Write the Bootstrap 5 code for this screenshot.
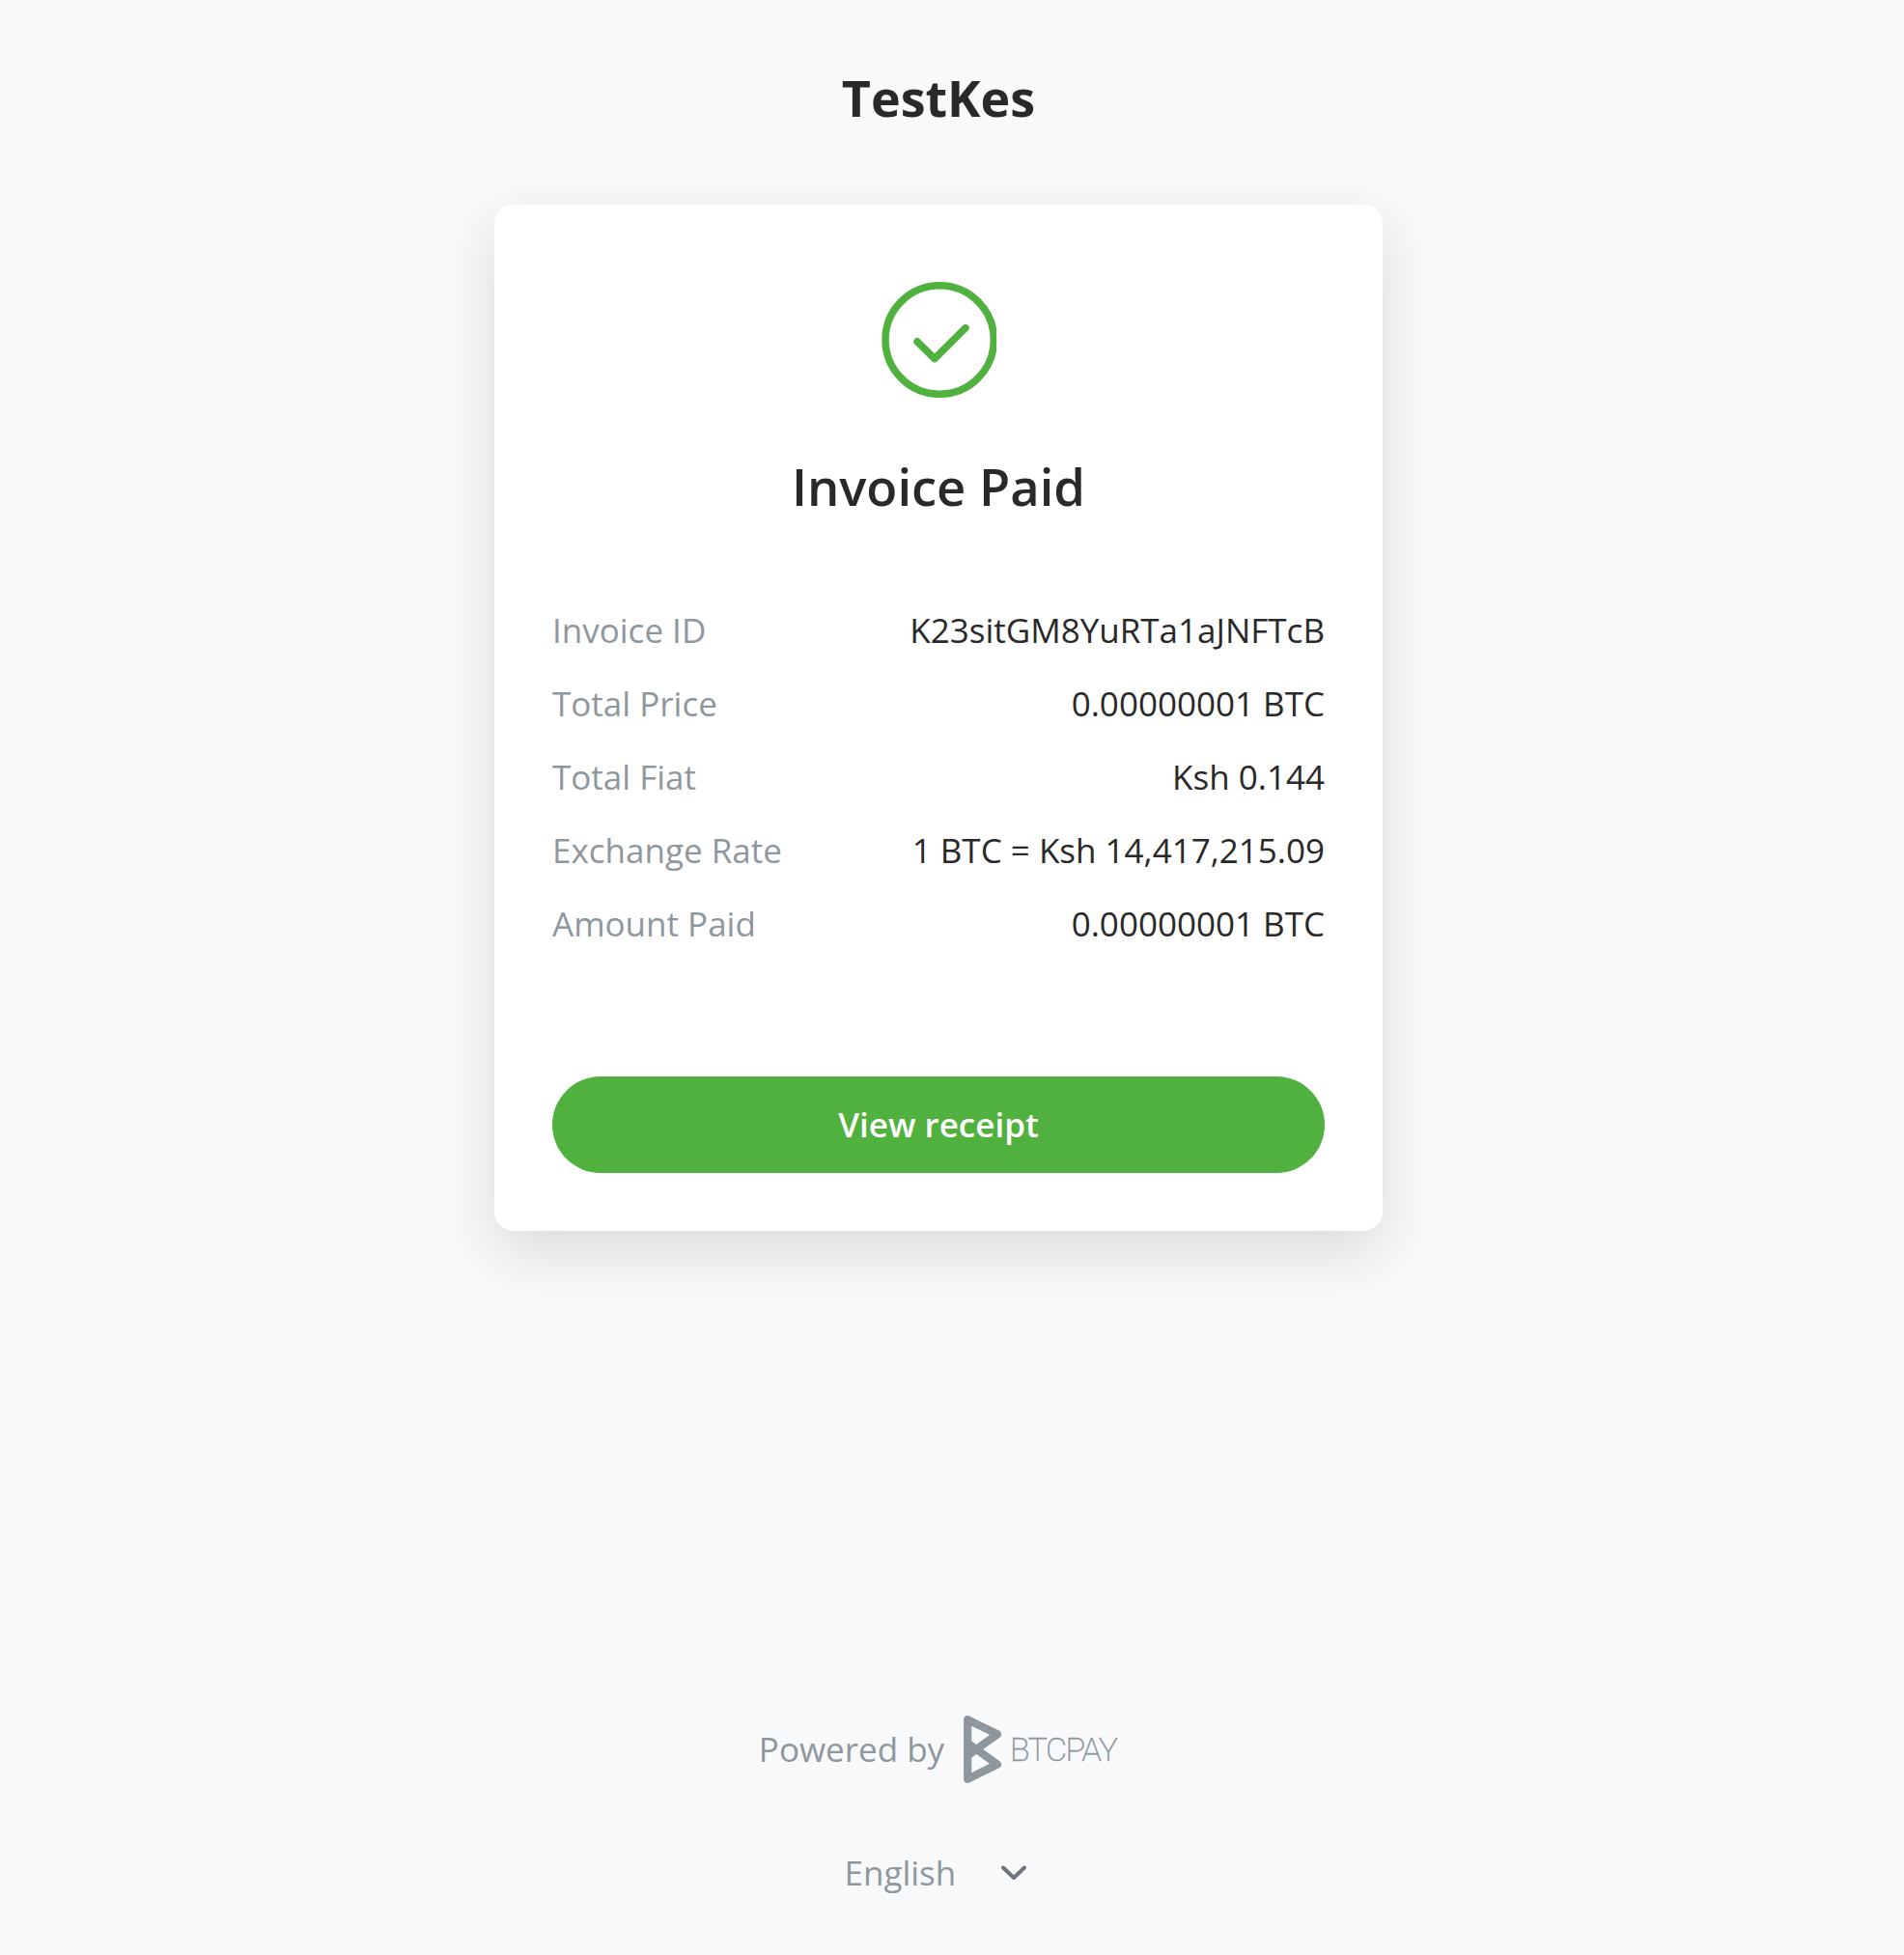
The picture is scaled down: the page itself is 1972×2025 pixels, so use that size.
<!DOCTYPE html>
<html lang="en">
<head>
<meta charset="utf-8">
<meta name="viewport" content="width=device-width, initial-scale=1">
<title>TestKes</title>
<link rel="stylesheet" href="https://cdn.jsdelivr.net/npm/bootstrap@5.3.0/dist/css/bootstrap.min.css">
<style>
  body { background: #f8f9fb; color: #292929; font-family: "Open Sans", sans-serif; font-size: 35px; line-height: 52px; }
  .checkout { width: 1944px; height: 2025px; padding-top: 71px; }
  .store-name, .status-title { font-size: 52px; line-height: 60px; }
  .store-name { font-weight: 700; margin-bottom: 81px; }
  .status-title { font-size: 52.5px; font-weight: 600; margin: 62px 0 81px; }
  .invoice-card { width: 920px; height: 1063px; padding: 80px 60px 60px; border-radius: 20px; background: #fff; box-shadow: 0 22px 60px rgba(0,0,0,.12); }
  .details dt, .details dd { font-weight: 400; line-height: 76px; }
  .details dt, .muted-text { color: #8f979e; }
  .btn-receipt, .btn-receipt:hover { height: 100px; margin-top: 120px; background: #51b13e; border: 0; color: #fff; font-size: 35px; font-weight: 600; line-height: 52px; }
  .powered { height: 70px; gap: 19px; margin-bottom: 67px; }
  .powered svg { margin-right: -5px; }
  .language { width: 195px; height: 111px; }
  .language svg { margin-right: 5px; margin-top: 12px; }
  svg { display: block; flex: none; }
</style>
</head>
<body>
<div class="checkout d-flex flex-column align-items-center">
  <h1 class="store-name">TestKes</h1>
  <main class="invoice-card d-flex flex-column align-items-stretch">
    <svg class="mx-auto" width="120" height="120" viewBox="0 0 120 120" fill="none" stroke="#51b13e" stroke-width="7.5">
      <circle cx="61.2" cy="60" r="56.2"/>
      <path d="M38 61.8 56 79.5 88 47.7" stroke-linecap="round" stroke-linejoin="round"/>
    </svg>
    <h2 class="status-title text-center">Invoice Paid</h2>
    <dl class="details mb-0">
      <div class="d-flex justify-content-between"><dt>Invoice ID</dt><dd class="mb-0">K23sitGM8YuRTa1aJNFTcB</dd></div>
      <div class="d-flex justify-content-between"><dt>Total Price</dt><dd class="mb-0">0.00000001 BTC</dd></div>
      <div class="d-flex justify-content-between"><dt>Total Fiat</dt><dd class="mb-0">Ksh 0.144</dd></div>
      <div class="d-flex justify-content-between"><dt>Exchange Rate</dt><dd class="mb-0">1 BTC = Ksh 14,417,215.09</dd></div>
      <div class="d-flex justify-content-between"><dt>Amount Paid</dt><dd class="mb-0">0.00000001 BTC</dd></div>
    </dl>
    <a class="btn btn-receipt rounded-pill w-100 d-flex align-items-center justify-content-center" href="#">View receipt</a>
  </main>
  <footer class="mt-auto d-flex flex-column align-items-center muted-text">
    <div class="powered d-flex align-items-center">
      <span>Powered by</span>
      <svg width="166" height="70" viewBox="0 0 166 70">
        <path d="M5.2 4.2V65.8L36 50.5 5.2 28.5M5.2 41.5 36 19.3 5.2 4.2" fill="none" stroke="#8f979e" stroke-width="8.2" stroke-linecap="round" stroke-linejoin="round"/>
        <text x="49" y="47" font-family="Roboto, sans-serif" font-size="34" font-weight="200" fill="#8f979e" stroke="#8f979e" stroke-width=".35" textLength="112">BTCPAY</text>
      </svg>
    </div>
    <div class="language d-flex align-items-start justify-content-between">
      <span>English</span>
      <svg width="28" height="28" viewBox="0 0 28 28" fill="none" stroke="#6e7681" stroke-width="4" stroke-linecap="round" stroke-linejoin="round"><path d="M3 8.5 14 19 25 8.5"/></svg>
    </div>
  </footer>
</div>
<script src="https://cdn.jsdelivr.net/npm/bootstrap@5.3.0/dist/js/bootstrap.bundle.min.js"></script>
</body>
</html>
